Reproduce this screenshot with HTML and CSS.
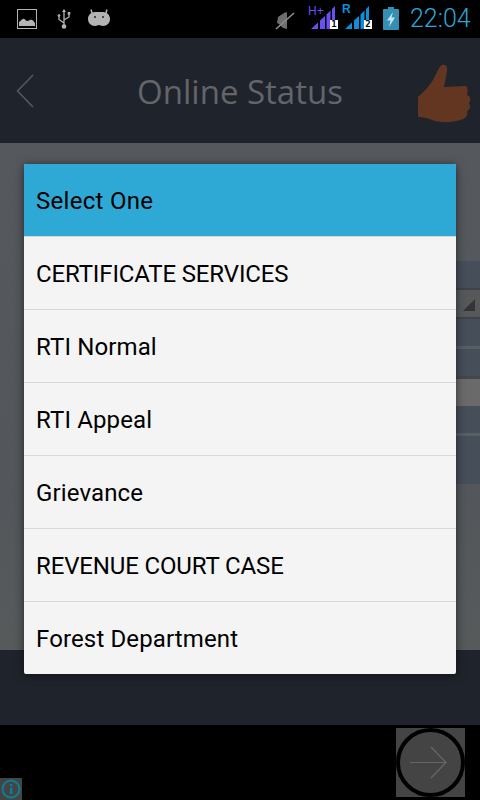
FILE: index.html

```html
<!DOCTYPE html>
<html lang="en">
<head>
    <meta charset="UTF-8">
    <meta name="viewport" content="width=device-width, initial-scale=1.0">
    <title>Online Status</title>
    <link rel="stylesheet" href="styles.css">
</head>
<body>
    <div class="status-bar">
        <div class="status-left">
            <svg class="ic-image" width="20" height="20" viewBox="0 0 20 20">
                <rect x="0.500" y="0.500" width="19" height="19" fill="none" stroke="#b4b4b4"/>
                <path d="M2 17V13L5 10.500C6 9.500 7 9.500 8 10.500L9.500 12L12 11.500L14 10.500L16 11.500L18 14V17Z" fill="#b4b4b4"/>
            </svg>
            <svg class="ic-usb" width="14" height="20" viewBox="0 0 14 20">
                <path d="M7 1V17M7 14L2 10.500V7M7 11L12 8V5" fill="none" stroke="#b4b4b4" stroke-width="1.300"/>
                <path d="M7 0L9 3H5Z" fill="#b4b4b4"/>
                <circle cx="7" cy="17.500" r="2.300" fill="#b4b4b4"/>
                <circle cx="2" cy="6.500" r="1.300" fill="#b4b4b4"/>
                <rect x="10.700" y="3" width="2.600" height="2.600" fill="#b4b4b4"/>
            </svg>
            <svg class="ic-droid" width="22" height="18" viewBox="0 0 22 18">
                <path d="M4 4L3 0.500M18 4L19 0.500" stroke="#b4b4b4" stroke-width="1.500"/>
                <path d="M7 3H15C19 3 22 6 22 10C22 14 19 17 15 17C13 17 12 16 11 16C10 16 9 17 7 17C3 17 0 14 0 10C0 6 3 3 7 3Z" fill="#b4b4b4"/>
                <circle cx="7" cy="8" r="1" fill="#222"/>
                <circle cx="15" cy="8" r="1" fill="#222"/>
            </svg>
        </div>
        <div class="status-right">
            <svg class="ic-mute" width="20" height="19" viewBox="0 0 20 19">
                <path d="M3 6L9 2L12 1V18L8 17L4 13L2 12Z" fill="#6e6e6e"/>
                <path d="M1 18L19 2" stroke="#8c8c8c" stroke-width="1.600"/>
            </svg>
            <div class="signal sim-one">
                <span class="net net-h">H+</span>
                <svg width="24" height="23" viewBox="0 0 24 23">
                    <path d="M0 23L7 16.500V23ZM9 23V14.500L14 10V23ZM15.500 23V8.500L19.500 4.500V23ZM21 23V3L24 0V23Z" fill="#6a50f2"/>
                </svg>
                <span class="sim">1</span>
            </div>
            <div class="signal sim-two">
                <span class="net net-r">R</span>
                <svg width="24" height="23" viewBox="0 0 24 23">
                    <path d="M0 23L7 16.500V23ZM9 23V14.500L14 10V23ZM15.500 23V8.500L19.500 4.500V23ZM21 23V3L24 0V23Z" fill="#0c8fdc"/>
                </svg>
                <span class="sim">2</span>
            </div>
            <svg class="ic-battery" width="16" height="23" viewBox="0 0 16 23">
                <path d="M5 0H11V2H15C15.600 2 16 2.400 16 3V22C16 22.600 15.600 23 15 23H1C0.400 23 0 22.600 0 22V3C0 2.400 0.400 2 1 2H5Z" fill="#3390b4"/>
                <path d="M10 5L4 13.500H7.500L6 20L12 10.500H8.500Z" fill="#c6e4f0"/>
            </svg>
            <span class="clock">22:04</span>
        </div>
    </div>

    <div class="header">
        <svg class="back" width="18" height="34" viewBox="0 0 18 34">
            <path d="M17 1L1.500 17L17 33" fill="none" stroke="#565a5f" stroke-width="1.500"/>
        </svg>
        <h1 class="title">Online Status</h1>
        <svg class="thumb" width="54" height="58" viewBox="0 0 54 58">
            <path d="M0 32C6 27 11 21 15 15C19 8 21 1 24 0C28 -1 30 2 29 7C28 12 27 17 26 22L47 21C50 21 50 26 49 30C53 31 53 36 51 38C53 41 52 45 49 46C50 50 48 53 45 54C36 58 21 58 14 55C9 53 5 52 0 52Z" fill="#633621"/>
        </svg>
    </div>

    <div class="content">
        <div class="rows">
            <div class="row row-blue"></div>
            <div class="row row-select"><span class="select-arrow"></span></div>
            <div class="row row-blue row-split"></div>
            <div class="row row-blue"></div>
            <div class="row row-field"></div>
            <div class="row row-blue row-split"></div>
            <div class="row row-blue row-tall"></div>
        </div>
    </div>

    <div class="footer"></div>

    <div class="bottom">
        <div class="info">
            <svg width="20" height="20" viewBox="0 0 20 20">
                <circle cx="10" cy="10" r="8.500" fill="none" stroke="#0b7f93" stroke-width="2"/>
                <rect x="9" y="8.500" width="2.400" height="6.500" fill="#0b7f93"/>
                <rect x="9" y="5" width="2.400" height="2.200" fill="#0b7f93"/>
            </svg>
        </div>
        <div class="next">
            <svg width="69" height="69" viewBox="0 0 69 69">
                <circle cx="34.500" cy="34.500" r="32.500" fill="none" stroke="#000" stroke-width="4"/>
                <path d="M34.500 0V3M34.500 66V69M0 34.500H3M66 34.500H69" stroke="#000" stroke-width="1"/>
                <path d="M14 34.500H50M35 19L50 34.500L35 50" fill="none" stroke="#676767" stroke-width="1.200"/>
            </svg>
        </div>
    </div>

    <div class="dialog">
        <div class="dialog-title">Select One</div>
        <div class="option caps">CERTIFICATE SERVICES</div>
        <div class="option">RTI Normal</div>
        <div class="option">RTI Appeal</div>
        <div class="option">Grievance</div>
        <div class="option caps">REVENUE COURT CASE</div>
        <div class="option">Forest Department</div>
    </div>
</body>
</html>
```

FILE: styles.css

```css
body {
    margin: 0;
    width: 480px;
    height: 800px;
    overflow: hidden;
    position: relative;
    background-color: #000;
    font-family: Roboto, sans-serif;
}

.status-bar {
    height: 38px;
    display: flex;
    justify-content: space-between;
    background-color: #000;
}

.status-left {
    display: flex;
    padding: 9px 0 0 17px;
}

.status-left svg {
    display: block;
}

.ic-usb {
    margin-left: 20px;
}

.ic-droid {
    margin-left: 17px;
}

.status-right {
    display: flex;
    padding-right: 10px;
}

.ic-mute {
    margin-top: 11px;
}

.signal {
    position: relative;
    width: 38px;
    height: 38px;
}

.signal svg {
    position: absolute;
    left: 3px;
    top: 6px;
}

.sim-one {
    margin-left: 13px;
}

.sim-two {
    margin-left: -4px;
}

.net {
    position: absolute;
    top: 5px;
    left: 0;
    font-family: "Liberation Sans", sans-serif;
    font-size: 12px;
    line-height: 12px;
}

.net-h {
    color: #6a50f2;
}

.net-r {
    top: 3px;
    color: #0c8fdc;
    font-weight: bold;
}

.sim {
    position: absolute;
    left: 22px;
    top: 20px;
    width: 8px;
    height: 9px;
    background-color: #fff;
    color: #000;
    font-family: "DejaVu Sans Mono", monospace;
    font-weight: bold;
    font-size: 9px;
    line-height: 9px;
    text-align: center;
}

.ic-battery {
    margin: 7px 0 0 3px;
}

.clock {
    width: 60px;
    margin-left: 11px;
    padding-top: 5px;
    font-size: 25px;
    font-weight: 300;
    line-height: 28px;
    white-space: nowrap;
    color: #2ea6d8;
}

.header {
    height: 105px;
    box-sizing: border-box;
    display: grid;
    grid-template-columns: 1fr auto 1fr;
    align-items: center;
    padding: 0 8px;
    background-color: #1f232b;
}

.back {
    justify-self: start;
    margin: 1px 0 0 8px;
}

.title {
    margin: 0;
    padding-top: 2px;
    font-family: "Open Sans", sans-serif;
    font-weight: normal;
    font-size: 33px;
    color: #63656a;
}

.thumb {
    justify-self: end;
    margin-top: 7px;
    overflow: visible;
}

.content {
    height: 507px;
    box-sizing: border-box;
    padding: 118px 0 0 60px;
    background: linear-gradient(#55595d, #53575b 70%, #565a5b);
}

.row {
    height: 27px;
    background-color: #464e5a;
}

.row-select {
    position: relative;
    border-top: 2px solid #3f4349;
    border-bottom: 2px solid #3f4349;
    background-color: #56585a;
}

.select-arrow {
    position: absolute;
    right: 5px;
    bottom: 6px;
    width: 0;
    height: 0;
    border-left: 12px solid transparent;
    border-bottom: 12px solid #333436;
}

.row-split {
    border-bottom: 3px solid #595e64;
}

.row-field {
    border-top: 3px solid #44474c;
    background-color: #6a6a6a;
}

.row-tall {
    height: 48px;
}

.footer {
    height: 75px;
    background-color: #1f232b;
}

.bottom {
    height: 75px;
    display: flex;
    justify-content: space-between;
    align-items: flex-end;
    padding: 0 15px 3px 0;
    box-sizing: border-box;
}

.info {
    width: 22px;
    height: 22px;
    margin-bottom: -3px;
    display: flex;
    align-items: center;
    justify-content: center;
    background-color: #444;
}

.next {
    width: 69px;
    height: 69px;
    background-color: #444;
}

.next svg, .info svg {
    display: block;
}

.dialog {
    position: absolute;
    left: 24px;
    top: 164px;
    width: 432px;
    height: 510px;
    overflow: hidden;
    border-radius: 2px;
    background-color: #f4f4f4;
    box-shadow: 0 1px 10px rgba(0, 0, 0, 0.55);
}

.dialog-title, .option {
    height: 73px;
    box-sizing: border-box;
    padding: 2px 12px 0;
    display: flex;
    align-items: center;
    font-size: 24px;
    letter-spacing: 0.13px;
    color: #000;
}

.dialog-title {
    height: 72px;
    letter-spacing: 0.3px;
    background-color: #2ea9d6;
}

.option {
    border-top: 1px solid #d8d8d8;
}

.caps {
    letter-spacing: -0.14px;
}
```
